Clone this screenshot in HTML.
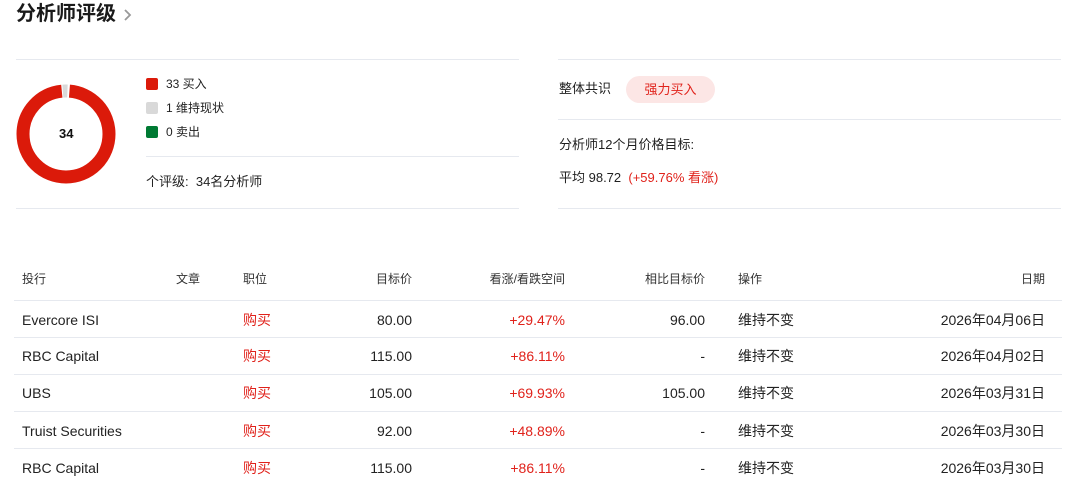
<!DOCTYPE html>
<html><head><meta charset="utf-8"><style>
*{margin:0;padding:0;box-sizing:border-box}
body{width:1068px;height:482px;background:#fff;font-family:"Liberation Sans","Noto Sans CJK SC",sans-serif;color:#1f1f1f;position:relative;overflow:hidden}
.a{position:absolute;white-space:nowrap;line-height:18px}
.hl{position:absolute;height:1px;background:#e6e9ef}
.r{text-align:right}
.th{font-size:12px;color:#333}
.td{font-size:14px;color:#222}
.red{color:#e0221b}
</style></head><body>
<div class="a" style="left:16px;top:3px;font-size:20px;font-weight:bold;color:#1a1a1a;line-height:22px">分析师评级</div>
<svg class="a" style="left:122px;top:7px" width="12" height="16"><path d="M3 3 L8 8 L3 13" fill="none" stroke="#999" stroke-width="1.8"/></svg>

<div class="hl" style="left:16px;top:59px;width:503px"></div>
<div class="hl" style="left:16px;top:208px;width:503px"></div>
<div class="hl" style="left:146px;top:156px;width:373px"></div>

<svg class="a" style="left:16px;top:84px" width="100" height="100" viewBox="0 0 100 100">
<circle cx="50" cy="50" r="43" fill="none" stroke="#db1a0a" stroke-width="13" stroke-dasharray="262 8.2" stroke-dashoffset="-3.5" transform="rotate(-90 50 50)"/>
<circle cx="50" cy="50" r="43" fill="none" stroke="#d9d9d9" stroke-width="13" stroke-dasharray="5 265" stroke-dashoffset="-266.5" transform="rotate(-90 50 50)"/>
</svg>
<div class="a" style="left:59px;top:125px;font-size:13px;font-weight:bold;color:#111">34</div>

<div class="a" style="left:146px;top:78px;width:12px;height:12px;border-radius:2px;background:#db1a0a"></div>
<div class="a" style="left:166px;top:75px;font-size:12px">33 买入</div>
<div class="a" style="left:146px;top:102px;width:12px;height:12px;border-radius:2px;background:#d9d9d9"></div>
<div class="a" style="left:166px;top:99px;font-size:12px">1 维持现状</div>
<div class="a" style="left:146px;top:126px;width:12px;height:12px;border-radius:2px;background:#007a33"></div>
<div class="a" style="left:166px;top:123px;font-size:12px">0 卖出</div>
<div class="a" style="left:146px;top:173px;font-size:13px;color:#222">个评级:&nbsp; 34名分析师</div>

<div class="hl" style="left:558px;top:59px;width:503px"></div>
<div class="hl" style="left:558px;top:119px;width:503px"></div>
<div class="hl" style="left:558px;top:208px;width:503px"></div>
<div class="a" style="left:559px;top:80px;font-size:13px">整体共识</div>
<div class="a" style="left:626px;top:76px;width:89px;height:27px;border-radius:14px;background:#fce6e5;color:#e0221b;font-size:13px;text-align:center;line-height:27px">强力买入</div>
<div class="a" style="left:559px;top:136px;font-size:13px">分析师12个月价格目标:</div>
<div class="a" style="left:559px;top:169px;font-size:13px">平均 98.72 <span class="red">&nbsp;(+59.76% 看涨)</span></div>

<div class="a th" style="left:22px;top:270px">投行</div>
<div class="a th" style="left:176px;top:270px">文章</div>
<div class="a th" style="left:243px;top:270px">职位</div>
<div class="a th r" style="right:656px;top:270px">目标价</div>
<div class="a th r" style="right:503px;top:270px">看涨/看跌空间</div>
<div class="a th r" style="right:363px;top:270px">相比目标价</div>
<div class="a th" style="left:738px;top:270px">操作</div>
<div class="a th r" style="right:23px;top:270px">日期</div>

<div class="hl" style="left:14px;top:300px;width:1048px"></div>
<div class="hl" style="left:14px;top:337px;width:1048px"></div>
<div class="hl" style="left:14px;top:374px;width:1048px"></div>
<div class="hl" style="left:14px;top:411px;width:1048px"></div>
<div class="hl" style="left:14px;top:448px;width:1048px"></div>

<div class="a td" style="left:22px;top:311px">Evercore ISI</div>
<div class="a td red" style="left:243px;top:311px">购买</div>
<div class="a td r" style="right:656px;top:311px">80.00</div>
<div class="a td r red" style="right:503px;top:311px">+29.47%</div>
<div class="a td r" style="right:363px;top:311px">96.00</div>
<div class="a td" style="left:738px;top:311px">维持不变</div>
<div class="a td r" style="right:23px;top:311px">2026年04月06日</div>

<div class="a td" style="left:22px;top:347px">RBC Capital</div>
<div class="a td red" style="left:243px;top:347px">购买</div>
<div class="a td r" style="right:656px;top:347px">115.00</div>
<div class="a td r red" style="right:503px;top:347px">+86.11%</div>
<div class="a td r" style="right:363px;top:347px">-</div>
<div class="a td" style="left:738px;top:347px">维持不变</div>
<div class="a td r" style="right:23px;top:347px">2026年04月02日</div>

<div class="a td" style="left:22px;top:384px">UBS</div>
<div class="a td red" style="left:243px;top:384px">购买</div>
<div class="a td r" style="right:656px;top:384px">105.00</div>
<div class="a td r red" style="right:503px;top:384px">+69.93%</div>
<div class="a td r" style="right:363px;top:384px">105.00</div>
<div class="a td" style="left:738px;top:384px">维持不变</div>
<div class="a td r" style="right:23px;top:384px">2026年03月31日</div>

<div class="a td" style="left:22px;top:422px">Truist Securities</div>
<div class="a td red" style="left:243px;top:422px">购买</div>
<div class="a td r" style="right:656px;top:422px">92.00</div>
<div class="a td r red" style="right:503px;top:422px">+48.89%</div>
<div class="a td r" style="right:363px;top:422px">-</div>
<div class="a td" style="left:738px;top:422px">维持不变</div>
<div class="a td r" style="right:23px;top:422px">2026年03月30日</div>

<div class="a td" style="left:22px;top:459px">RBC Capital</div>
<div class="a td red" style="left:243px;top:459px">购买</div>
<div class="a td r" style="right:656px;top:459px">115.00</div>
<div class="a td r red" style="right:503px;top:459px">+86.11%</div>
<div class="a td r" style="right:363px;top:459px">-</div>
<div class="a td" style="left:738px;top:459px">维持不变</div>
<div class="a td r" style="right:23px;top:459px">2026年03月30日</div>
</body></html>
